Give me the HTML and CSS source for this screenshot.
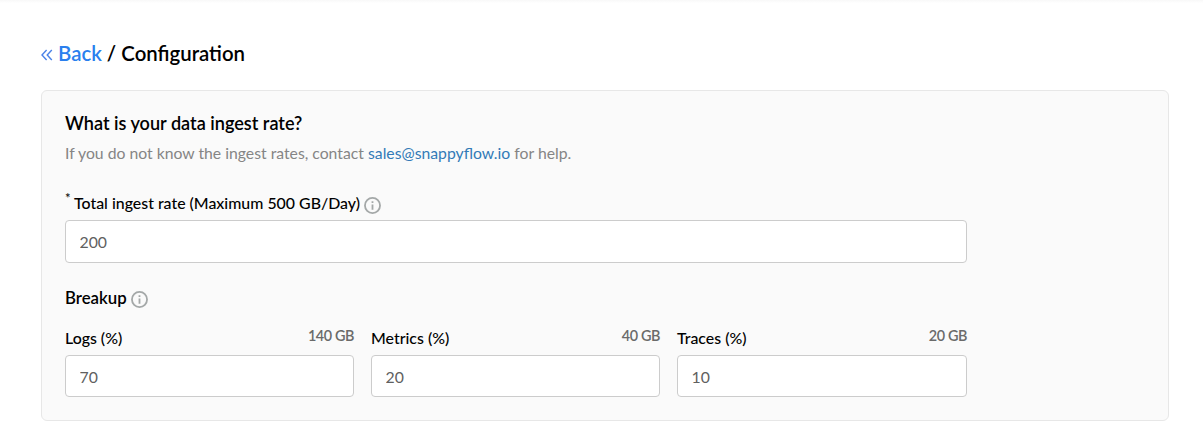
FILE: index.html
```html
<!DOCTYPE html>
<html lang="en">
<head>
<meta charset="utf-8">
<title>Configuration</title>
<link rel="stylesheet" href="styles.css">
</head>
<body>
<main class="page">
  <h1 class="crumbs">
    <a class="back" href="#"><svg class="chevrons" viewBox="0 0 12 12"><path d="M5.600 1 1 6l4.600 5M10.800 1 6.200 6l4.600 5"/></svg>Back</a>
    <span class="current">/ Configuration</span>
  </h1>
  <section class="panel">
    <h2 class="question">What is your data ingest rate?</h2>
    <p class="hint">If you do not know the ingest rates, contact <a class="mail" href="#">sales@snappyflow.io</a> for help.</p>
    <div class="form">
      <label class="total-label"><span class="star">*</span><span class="total-text">Total ingest rate (Maximum 500 GB/Day)</span><svg class="info" viewBox="0 0 16 16"><circle cx="8" cy="8" r="7.100"/><path d="M8 4v1.600M8 7v5"/></svg></label>
      <input class="field total" value="200">
      <h3 class="breakup"><span>Breakup</span><svg class="info" viewBox="0 0 16 16"><circle cx="8" cy="8" r="7.100"/><path d="M8 4v1.600M8 7v5"/></svg></h3>
      <div class="columns">
        <div class="column"><div class="row"><label class="name">Logs (%)</label><span class="size">140 GB</span></div><input class="field" value="70"></div>
        <div class="column"><div class="row"><label class="name">Metrics (%)</label><span class="size">40 GB</span></div><input class="field" value="20"></div>
        <div class="column"><div class="row"><label class="name">Traces (%)</label><span class="size">20 GB</span></div><input class="field" value="10"></div>
      </div>
    </div>
  </section>
</main>
</body>
</html>
```
FILE: styles.css
```css
* { box-sizing: border-box; }
body { margin: 0; background: #fff; font-family: Lato, sans-serif; color: #000; overflow: hidden; }
h1, h2, h3, p { margin: 0; font-weight: 600; }
a { text-decoration: none; }
.page { height: 433px; padding: 39px 34px 0 41px; background: linear-gradient(#f8f8f8, #fff 3px); }
.crumbs { display: flex; gap: 5px; height: 51px; font-size: 20.4px; line-height: 28px; white-space: nowrap; }
.back { display: flex; color: #2a7fee; }
.chevrons { width: 12px; height: 12px; margin: 10px 5px 0 0; fill: none; stroke: #4a82e8; stroke-width: 1.4; }
.panel { height: 331px; padding: 20px 23px 0; background: #fafafa; border: 1px solid #e7e7e7; border-radius: 6px; }
.question { font-size: 18.1px; line-height: 24px; }
.hint { margin-top: 6px; font-size: 15.75px; line-height: 24px; font-weight: 400; color: #858585; }
.mail { color: #337ab7; }
.form { width: 902px; }
.total-label { display: flex; height: 26px; margin-top: 29px; font-size: 15.9px; font-weight: 500; line-height: 18px; }
.star { width: 9px; margin-top: -5px; font-size: 13px; line-height: 18px; }
.info { width: 17px; height: 17px; margin: 3px 0 0 4px; fill: none; stroke: #a4a8a8; stroke-width: 1.7; }
.field { display: block; width: 100%; height: 42px; padding: 1px 14px 0 13.5px; border: 1px solid #ccc; border-radius: 4px; background: #fff; font: 400 15.8px Lato, sans-serif; color: #606060; outline: 0; }
.total { height: 43px; padding-top: 0; padding-bottom: 1px; }
.breakup { display: flex; height: 20px; margin-top: 25px; font-size: 16.8px; line-height: 20px; }
.breakup .info { margin-top: 3px; }
.columns { display: grid; grid-template-columns: 289px 289px 290px; gap: 17px; margin-top: 17px; }
.row { display: flex; justify-content: space-between; height: 30px; font-size: 15.9px; line-height: 20px; }
.name { margin-top: 3px; font-weight: 500; }
.size { margin-top: 1px; color: #6a6a6a; font-size: 14.4px; font-weight: 600; letter-spacing: -0.4px; }
```
